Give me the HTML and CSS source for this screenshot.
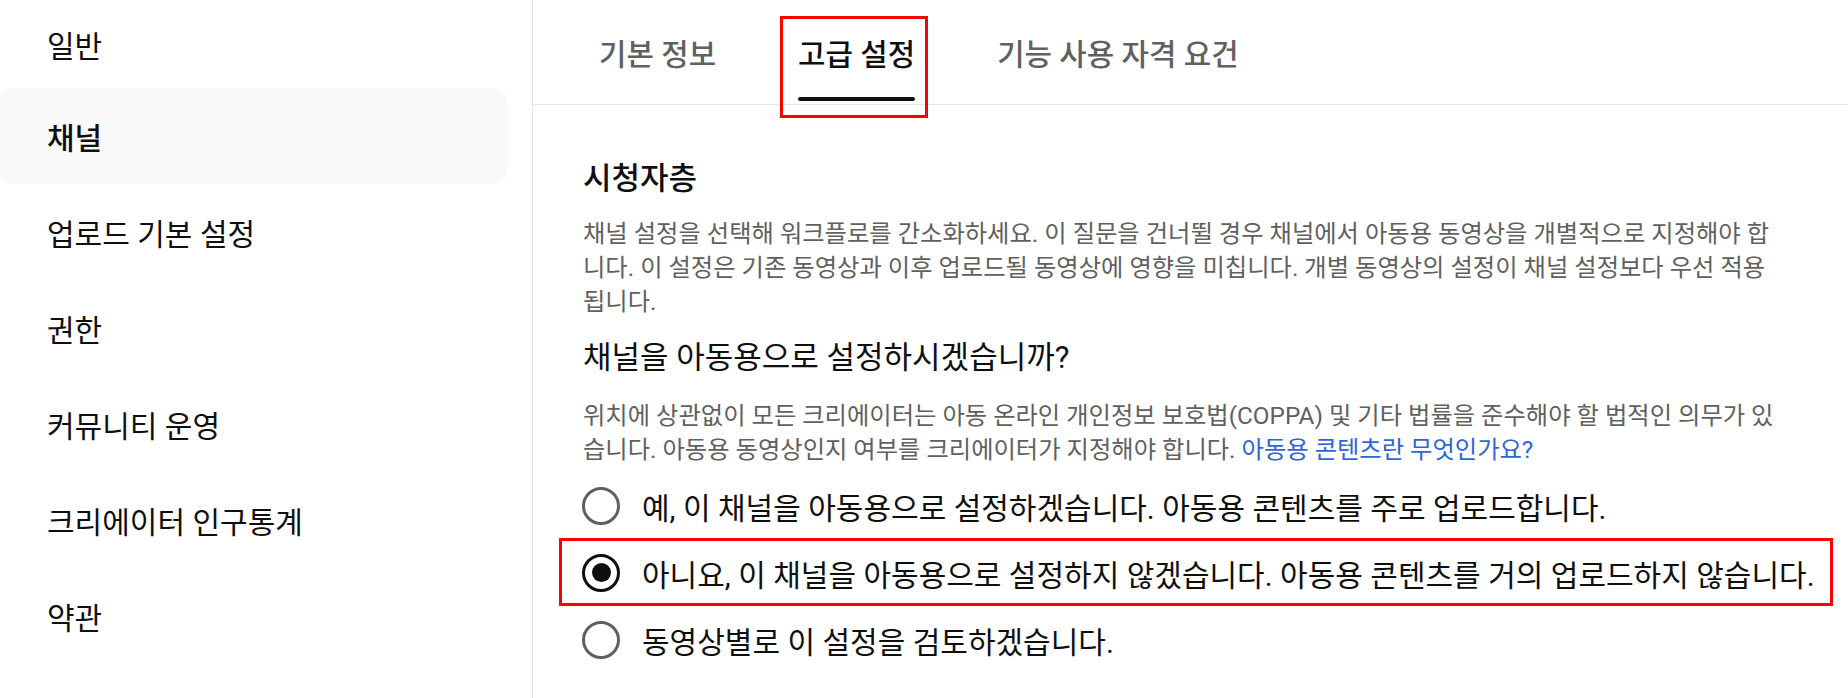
FILE: index.html
```html
<!DOCTYPE html>
<html lang="ko">
<head>
    <meta charset="UTF-8">
    <meta name="viewport" content="width=device-width, initial-scale=1.0">
    <title>채널 설정</title>
    <link rel="stylesheet" href="styles.css">
</head>
<body>

    <div class="page">

        <nav class="sidebar">
            <a class="nav-item" href="#">일반</a>
            <a class="nav-item selected" href="#">채널</a>
            <a class="nav-item" href="#">업로드 기본 설정</a>
            <a class="nav-item" href="#">권한</a>
            <a class="nav-item" href="#">커뮤니티 운영</a>
            <a class="nav-item" href="#">크리에이터 인구통계</a>
            <a class="nav-item" href="#">약관</a>
        </nav>

        <main class="main">
            <div class="tabs">
                <div class="tab">기본 정보</div>
                <div class="tab active">
                    고급 설정
                    <span class="highlight tab-highlight"></span>
                </div>
                <div class="tab">기능 사용 자격 요건</div>
            </div>

            <section class="section">
                <h2>시청자층</h2>
                <p class="desc">채널 설정을 선택해 워크플로를 간소화하세요. 이 질문을 건너뛸 경우 채널에서 아동용 동영상을 개별적으로 지정해야 합니다. 이 설정은 기존 동영상과 이후 업로드될 동영상에 영향을 미칩니다. 개별 동영상의 설정이 채널 설정보다 우선 적용됩니다.</p>

                <h3>채널을 아동용으로 설정하시겠습니까?</h3>
                <p class="desc coppa">위치에 상관없이 모든 크리에이터는 아동 온라인 개인정보 보호법(COPPA) 및 기타 법률을 준수해야 할 법적인 의무가 있습니다. 아동용 동영상인지 여부를 크리에이터가 지정해야 합니다. <a href="#">아동용 콘텐츠란 무엇인가요?</a></p>

                <div class="options">
                    <label class="option">
                        <span class="radio"></span>
                        예, 이 채널을 아동용으로 설정하겠습니다. 아동용 콘텐츠를 주로 업로드합니다.
                    </label>
                    <label class="option">
                        <span class="radio checked"></span>
                        아니요, 이 채널을 아동용으로 설정하지 않겠습니다. 아동용 콘텐츠를 거의 업로드하지 않습니다.
                        <span class="highlight option-highlight"></span>
                    </label>
                    <label class="option">
                        <span class="radio"></span>
                        동영상별로 이 설정을 검토하겠습니다.
                    </label>
                </div>
            </section>
        </main>

    </div>

</body>
</html>
```

FILE: styles.css
```css
body {
    margin: 0;
    font-family: Roboto, "Noto Sans CJK KR", sans-serif;
    background-color: #fff;
    color: #0f0f0f;
    overflow: hidden;
}

.page {
    display: flex;
    height: 100vh;
}

/* 왼쪽 메뉴 */
.sidebar {
    width: 532px;
    flex-shrink: 0;
    border-right: 1px solid #e5e5e5;
    display: flex;
    flex-direction: column;
    margin-top: -8px;
}

.nav-item {
    height: 96px;
    width: 507px;
    display: flex;
    align-items: center;
    box-sizing: border-box;
    padding-left: 47px;
    font-size: 30px;
    color: #0f0f0f;
    text-decoration: none;
    border-radius: 14px;
}

.nav-item:first-child {
    padding-top: 7px;
}

.nav-item.selected {
    background-color: #f9f9f9;
    font-weight: 500;
}

/* 본문 */
.main {
    flex: 1;
}

.tabs {
    display: flex;
    height: 104px;
    padding-left: 66px;
    border-bottom: 1px solid #e5e5e5;
}

.tab {
    position: relative;
    display: flex;
    align-items: center;
    margin-right: 82px;
    font-size: 29.8px;
    font-weight: 500;
    color: #606060;
    cursor: pointer;
}

.tab.active {
    color: #0f0f0f;
}

.tab.active::after {
    content: "";
    position: absolute;
    left: 0;
    right: 0;
    bottom: 3px;
    height: 4px;
    border-radius: 2px;
    background-color: #0f0f0f;
}

.section {
    padding: 54px 0 0 50px;
}

h2 {
    margin: 0;
    font-size: 31px;
    line-height: 40px;
    font-weight: 500;
}

h3 {
    margin: 19px 0 0;
    font-size: 31px;
    line-height: 40px;
    font-weight: 400;
}

.desc {
    margin: 18px 0 0;
    max-width: 1195px;
    font-size: 24.3px;
    line-height: 34px;
    color: #606060;
}

.desc.coppa {
    margin-top: 21px;
}

.desc a {
    color: #3064d9;
    text-decoration: none;
}

.options {
    display: flex;
    flex-direction: column;
    margin-top: 5px;
}

.option {
    position: relative;
    display: flex;
    align-items: center;
    gap: 22px;
    height: 67px;
    font-size: 30px;
    white-space: nowrap;
    cursor: pointer;
}

.radio {
    width: 38px;
    height: 38px;
    box-sizing: border-box;
    border: 3px solid #606060;
    border-radius: 50%;
    display: flex;
    align-items: center;
    justify-content: center;
    flex-shrink: 0;
    margin-left: -1px;
}

.radio.checked {
    border-color: #0f0f0f;
}

.radio.checked::after {
    content: "";
    width: 19px;
    height: 19px;
    border-radius: 50%;
    background-color: #0f0f0f;
}

/* 빨간 강조 표시 */
.highlight {
    position: absolute;
    border: 3px solid #ff0000;
    pointer-events: none;
}

.tab-highlight {
    top: 16px;
    bottom: -14px;
    left: -18px;
    right: -13px;
}

.option-highlight {
    top: -1px;
    bottom: 0;
    left: -24px;
    width: 1268px;
}
```
